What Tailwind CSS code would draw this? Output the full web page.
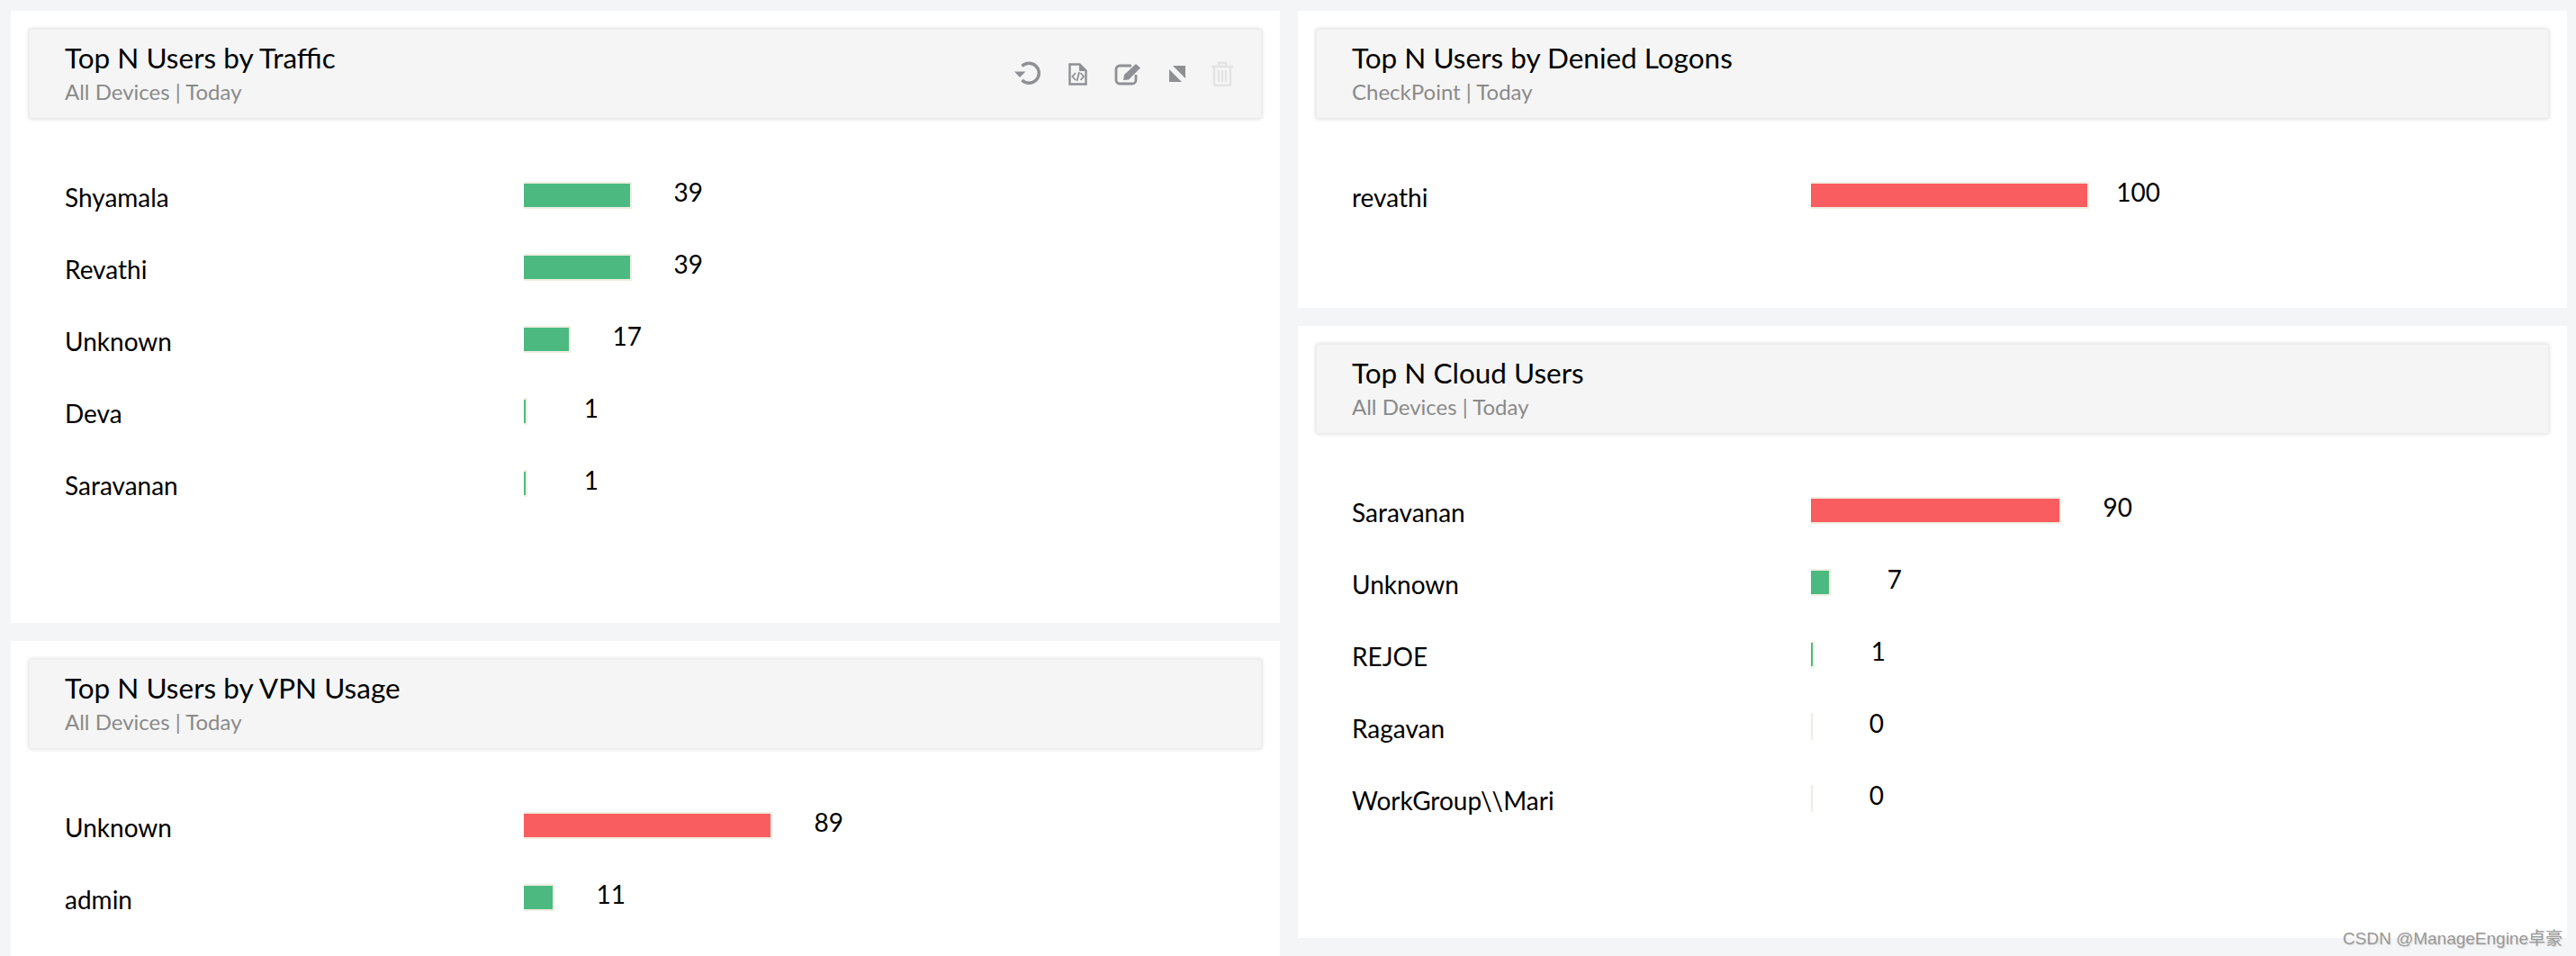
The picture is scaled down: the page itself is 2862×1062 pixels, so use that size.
<!DOCTYPE html>
<html>
<head>
<meta charset="utf-8">
<script src="https://cdn.jsdelivr.net/npm/@tailwindcss/browser@4"></script>
</head>
<body class="m-0 bg-[#f4f5f7] font-['Lato','Noto_Sans',sans-serif]">
<div class="relative h-[1062px] w-[2862px] overflow-hidden pt-3 pl-3 pr-2.5">
  <div class="grid grid-cols-2 gap-x-5">
    <div class="flex flex-col gap-5">
      <section class="h-[680px] bg-white p-5">
        <header class="flex h-[100px] items-center justify-between rounded-[2px] border border-[#ededed] bg-[#f5f5f5] pl-[39px] pr-[31px] shadow-[0_0_4px_rgba(0,0,0,0.16)]">
          <div>
            <h2 class="mb-[2px] text-[31.5px] leading-[38px] text-black">Top N Users by Traffic</h2>
            <p class="text-[24px] leading-[34px] text-[#8a8a8a]">All Devices | Today</p>
          </div>
          <div class="flex items-center text-[#8e9093]">
            <svg class="mr-[30px] h-[30px] w-[30px]" viewBox="0 0 30 30" fill="none" stroke="currentColor" stroke-width="3.400"><path d="M8.500 6.500A11 11 0 1 1 8.500 22"/><path d="M0 12.500h12.500l-6.500 6.500z" fill="currentColor" stroke="none"/></svg>
            <svg class="mr-[30px] h-[25px] w-[21px]" viewBox="0 0 21 25" fill="none" stroke="currentColor" stroke-width="2.400"><path d="M1.500 1.500h11l7 7v15h-18z"/><path d="M12.500 1.500v7h7" fill="currentColor" stroke-width="1"/><path d="M8 11l-3.500 4 3.500 4M13.500 11l3.500 4-3.500 4M12 10l-2.500 10" stroke-width="1.800"/></svg>
            <svg class="mr-[31px] h-[25px] w-[30px]" viewBox="0 0 30 25" fill="none" stroke="currentColor" stroke-width="2.800"><path d="M19 3H6a4 4 0 0 0-4 4v12a4 4 0 0 0 4 4h14a4 4 0 0 0 4-4v-6"/><path d="M10 19l1-6L24 1l5 4.500-13 13z" fill="currentColor" stroke="none"/></svg>
            <svg class="mr-[29px] h-[18px] w-[18px]" viewBox="0 0 18 18" fill="currentColor"><path d="M0 4V18H14zM4 0H18V14z"/></svg>
            <svg class="h-[28px] w-[24px] text-[#e3e3e3]" viewBox="0 0 24 28" fill="none" stroke="currentColor" stroke-width="2.400"><path d="M0 6h24M8 5V2h8v3M3 7v18a2 2 0 0 0 2 2h14a2 2 0 0 0 2-2V7"/><path d="M8 10v13M12 10v13M16 10v13" stroke-width="2.200"/></svg>
          </div>
        </header>
        <div class="mt-[45px] pl-10">
          <div class="flex h-20 items-center"><span class="w-[510px] pt-1 text-[28px] text-black">Shyamala</span><span class="h-[30px] w-[120px] border-y-2 border-r-2 border-[#efeee0] bg-[#4cba80]"></span><span class="w-[79px] pb-2 text-right text-[28px] text-black">39</span></div>
          <div class="flex h-20 items-center"><span class="w-[510px] pt-1 text-[28px] text-black">Revathi</span><span class="h-[30px] w-[120px] border-y-2 border-r-2 border-[#efeee0] bg-[#4cba80]"></span><span class="w-[79px] pb-2 text-right text-[28px] text-black">39</span></div>
          <div class="flex h-20 items-center"><span class="w-[510px] pt-1 text-[28px] text-black">Unknown</span><span class="h-[30px] w-[52px] border-y-2 border-r-2 border-[#efeee0] bg-[#4cba80]"></span><span class="w-[79px] pb-2 text-right text-[28px] text-black">17</span></div>
          <div class="flex h-20 items-center"><span class="w-[510px] pt-1 text-[28px] text-black">Deva</span><span class="h-[30px] w-[4px] border-y-2 border-r-2 border-[#efeee0] bg-[#4cba80]"></span><span class="w-[79px] pb-2 text-right text-[28px] text-black">1</span></div>
          <div class="flex h-20 items-center"><span class="w-[510px] pt-1 text-[28px] text-black">Saravanan</span><span class="h-[30px] w-[4px] border-y-2 border-r-2 border-[#efeee0] bg-[#4cba80]"></span><span class="w-[79px] pb-2 text-right text-[28px] text-black">1</span></div>
        </div>
      </section>
      <section class="h-[680px] bg-white p-5">
        <header class="flex h-[100px] items-center rounded-[2px] border border-[#ededed] bg-[#f5f5f5] pl-[39px] shadow-[0_0_4px_rgba(0,0,0,0.16)]">
          <div>
            <h2 class="mb-[2px] text-[31.5px] leading-[38px] text-black">Top N Users by VPN Usage</h2>
            <p class="text-[24px] leading-[34px] text-[#8a8a8a]">All Devices | Today</p>
          </div>
        </header>
        <div class="mt-[45px] pl-10">
          <div class="flex h-20 items-center"><span class="w-[510px] pt-1 text-[28px] text-black">Unknown</span><span class="h-[30px] w-[276px] border-y-2 border-r-2 border-[#efeee0] bg-[#fa5d60]"></span><span class="w-[79px] pb-2 text-right text-[28px] text-black">89</span></div>
          <div class="flex h-20 items-center"><span class="w-[510px] pt-1 text-[28px] text-black">admin</span><span class="h-[30px] w-[34px] border-y-2 border-r-2 border-[#efeee0] bg-[#4cba80]"></span><span class="w-[79px] pb-2 text-right text-[28px] text-black">11</span></div>
        </div>
      </section>
    </div>
    <div class="flex flex-col gap-5">
      <section class="h-[330px] bg-white p-5">
        <header class="flex h-[100px] items-center rounded-[2px] border border-[#ededed] bg-[#f5f5f5] pl-[39px] shadow-[0_0_4px_rgba(0,0,0,0.16)]">
          <div>
            <h2 class="mb-[2px] text-[31.5px] leading-[38px] text-black">Top N Users by Denied Logons</h2>
            <p class="text-[24px] leading-[34px] text-[#8a8a8a]">CheckPoint | Today</p>
          </div>
        </header>
        <div class="mt-[45px] pl-10">
          <div class="flex h-20 items-center"><span class="w-[510px] pt-1 text-[28px] text-black">revathi</span><span class="h-[30px] w-[309px] border-y-2 border-r-2 border-[#efeee0] bg-[#fa5d60]"></span><span class="w-[79px] pb-2 text-right text-[28px] text-black">100</span></div>
        </div>
      </section>
      <section class="h-[680px] bg-white p-5">
        <header class="flex h-[100px] items-center rounded-[2px] border border-[#ededed] bg-[#f5f5f5] pl-[39px] shadow-[0_0_4px_rgba(0,0,0,0.16)]">
          <div>
            <h2 class="mb-[2px] text-[31.5px] leading-[38px] text-black">Top N Cloud Users</h2>
            <p class="text-[24px] leading-[34px] text-[#8a8a8a]">All Devices | Today</p>
          </div>
        </header>
        <div class="mt-[45px] pl-10">
          <div class="flex h-20 items-center"><span class="w-[510px] pt-1 text-[28px] text-black">Saravanan</span><span class="h-[30px] w-[278px] border-y-2 border-r-2 border-[#efeee0] bg-[#fa5d60]"></span><span class="w-[79px] pb-2 text-right text-[28px] text-black">90</span></div>
          <div class="flex h-20 items-center"><span class="w-[510px] pt-1 text-[28px] text-black">Unknown</span><span class="h-[30px] w-[22px] border-y-2 border-r-2 border-[#efeee0] bg-[#4cba80]"></span><span class="w-[79px] pb-2 text-right text-[28px] text-black">7</span></div>
          <div class="flex h-20 items-center"><span class="w-[510px] pt-1 text-[28px] text-black">REJOE</span><span class="h-[30px] w-[4px] border-y-2 border-r-2 border-[#efeee0] bg-[#4cba80]"></span><span class="w-[79px] pb-2 text-right text-[28px] text-black">1</span></div>
          <div class="flex h-20 items-center"><span class="w-[510px] pt-1 text-[28px] text-black">Ragavan</span><span class="h-[30px] w-[2px] bg-[#efeee0]"></span><span class="w-[79px] pb-2 text-right text-[28px] text-black">0</span></div>
          <div class="flex h-20 items-center"><span class="w-[510px] pt-1 text-[28px] text-black">WorkGroup\\Mari</span><span class="h-[30px] w-[2px] bg-[#efeee0]"></span><span class="w-[79px] pb-2 text-right text-[28px] text-black">0</span></div>
        </div>
      </section>
    </div>
  </div>
  <div class="absolute right-[15px] top-[1030px] font-['Liberation_Sans','Noto_Sans_CJK_SC',sans-serif] text-[19px] leading-[26px] text-[#9a9a9a] [text-shadow:1px_1px_1px_rgba(0,0,0,0.12)]">CSDN @ManageEngine卓豪</div>
</div>
</body>
</html>
